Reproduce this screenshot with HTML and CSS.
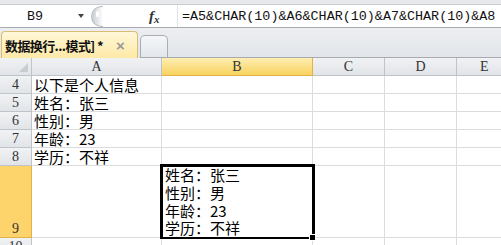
FILE: index.html
```html
<!DOCTYPE html>
<html>
<head>
<meta charset="utf-8">
<link rel="stylesheet" href="styles.css">
</head>
<body>
<div class="app">
  <div class="fbar">
    <div class="fbar-inner">
      <div class="namebox"><span class="name">B9</span><span class="drop"></span></div>
      <div class="splitter"><span class="dot"></span></div>
      <div class="fx">f<span class="x">x</span></div>
      <div class="formula">=A5&amp;CHAR(10)&amp;A6&amp;CHAR(10)&amp;A7&amp;CHAR(10)&amp;A8</div>
    </div>
  </div>
  <div class="tabs">
    <div class="tab active"><span class="tab-title">数据换行...模式] *</span><span class="close">×</span></div>
    <div class="tab blank"></div>
    <div class="tab-rest"></div>
  </div>
  <div class="grid">
    <div class="corner"><span class="tri"></span></div>
    <div class="ch">A</div>
    <div class="ch sel">B</div>
    <div class="ch">C</div>
    <div class="ch">D</div>
    <div class="ch last">E</div>

    <div class="rh">4</div><div class="c">以下是个人信息</div><div class="c"></div><div class="c"></div><div class="c"></div><div class="c last"></div>
    <div class="rh">5</div><div class="c">姓名：张三</div><div class="c"></div><div class="c"></div><div class="c"></div><div class="c last"></div>
    <div class="rh">6</div><div class="c">性别：男</div><div class="c"></div><div class="c"></div><div class="c"></div><div class="c last"></div>
    <div class="rh">7</div><div class="c">年龄：23</div><div class="c"></div><div class="c"></div><div class="c"></div><div class="c last"></div>
    <div class="rh">8</div><div class="c">学历：不祥</div><div class="c"></div><div class="c"></div><div class="c"></div><div class="c last"></div>
    <div class="rh sel">9</div><div class="c"></div><div class="c active"><div class="wrap">姓名：张三<br>性别：男<br>年龄：23<br>学历：不祥</div><span class="selbox"></span><span class="handle"></span></div><div class="c"></div><div class="c"></div><div class="c last"></div>
    <div class="rh">10</div><div class="c"></div><div class="c"></div><div class="c"></div><div class="c"></div><div class="c last"></div>
  </div>
</div>
</body>
</html>
```

FILE: styles.css
```css
* { box-sizing: border-box; }
html, body { margin: 0; padding: 0; }
body {
  width: 501px;
  height: 245px;
  overflow: hidden;
  background: #fff;
  font-family: "Noto Sans CJK SC", "Liberation Sans", sans-serif;
}
.app { width: 501px; height: 245px; overflow: hidden; }

/* formula bar */
.fbar {
  height: 28px;
  background: #e6e8eb;
  padding-top: 4px;
  border-bottom: 1px solid #a7abb0;
}
.fbar-inner {
  height: 23px;
  background: #fff;
  display: flex;
  align-items: center;
  border-top: 1px solid #c9ccd1;
}
.namebox {
  width: 89px;
  height: 100%;
  display: flex;
  align-items: center;
  position: relative;
}
.name {
  font-family: "Liberation Mono", monospace;
  font-size: 13.4px;
  color: #111;
  margin-left: 27px;
}
.drop {
  position: absolute;
  left: 78px;
  top: 9px;
  width: 0;
  height: 0;
  border-left: 3.5px solid transparent;
  border-right: 3.5px solid transparent;
  border-top: 4px solid #444;
}
.splitter {
  width: 12px;
  height: 21px;
  margin-left: 2px;
  border-radius: 11px 0 0 11px;
  background: linear-gradient(90deg, #c8ccd2, #eef0f2 70%, #fff);
  border: 1px solid #b9bec5;
  border-right: none;
  position: relative;
}
.dot {
  position: absolute;
  left: 4px;
  top: 4px;
  width: 3px;
  height: 6px;
  border-radius: 2px;
  background: #fff;
}
.fx {
  margin-left: 46px;
  width: 22px;
  font-family: "Liberation Serif", serif;
  font-style: italic;
  font-weight: bold;
  font-size: 15px;
  color: #333;
  line-height: 1;
}
.fx .x { font-size: 11px; position: relative; top: 2px; }
.formula {
  margin-left: 6px;
  font-family: "Liberation Mono", monospace;
  font-size: 13.4px;
  color: #111;
  white-space: nowrap;
  height: 100%;
  display: flex;
  align-items: center;
  border-left: 1px solid #e2e4e7;
  padding-left: 4px;
}

/* tabs */
.tabs {
  height: 30px;
  background: linear-gradient(#eceef1, #e2e5e9);
  display: flex;
  align-items: flex-end;
}
.tab.active {
  width: 137px;
  height: 27px;
  margin-left: 1px;
  border: 1px solid #d9bd72;
  border-bottom: none;
  border-radius: 4px 4px 0 0;
  background: linear-gradient(#fff7d8, #fee9a6);
  display: flex;
  align-items: center;
  padding-left: 3px;
}
.tab-title {
  font-weight: bold;
  font-size: 13px;
  color: #111;
  letter-spacing: -0.6px;
  white-space: nowrap;
}
.close {
  margin-left: 13px;
  font-family: "Liberation Sans", sans-serif;
  font-size: 15px;
  color: #9a9a9a;
  font-weight: bold;
}
.tab.blank {
  width: 28px;
  height: 23px;
  margin-left: 2px;
  border: 1px solid #a9aeb6;
  border-bottom: 1px solid #a7abb0;
  border-radius: 5px 5px 0 0;
  background: linear-gradient(#f4f6f8, #e3e7ec);
}
.tab-rest {
  flex: 1;
  height: 1px;
  background: #a7abb0;
}

/* grid */
.grid {
  display: grid;
  grid-template-columns: 32px 130px 151px 72px 72px 44px;
  grid-template-rows: 18px 18px 18px 18px 18px 18px 72px 18px;
  font-size: 15px;
}
.corner, .ch, .rh {
  background: linear-gradient(#f1f2f4, #e1e4e8);
  border-right: 1px solid #bfc4ca;
  border-bottom: 1px solid #bfc4ca;
  color: #333;
  font-family: "Liberation Serif", serif;
  font-size: 14px;
}
.corner { position: relative; }
.tri {
  position: absolute;
  right: 3px;
  bottom: 3px;
  width: 0; height: 0;
  border-left: 9px solid transparent;
  border-bottom: 9px solid #c9ccd1;
}
.ch {
  display: flex;
  align-items: center;
  justify-content: center;
  line-height: 1;
}
.ch.sel {
  background: linear-gradient(#fdeeb2, #f9d25f);
  border-bottom: 1px solid #e2b247;
  border-right: 1px solid #e2b247;
}
.ch.last { border-right: none; justify-content: flex-start; padding-left: 23px; }
.rh {
  display: flex;
  align-items: flex-end;
  justify-content: center;
  line-height: 17px;
}
.rh.sel {
  background: #fdd46b;
  border-color: #e2b247;
}
.c {
  border-right: 1px solid #dadcde;
  border-bottom: 1px solid #dadcde;
  padding-left: 2px;
  display: flex;
  align-items: flex-end;
  line-height: 17px;
  color: #000;
  white-space: nowrap;
  position: relative;
}
.c.last { border-right: none; }
.c.active {
  padding-left: 3px;
  align-items: flex-start;
  z-index: 2;
}
.wrap { line-height: 17.75px; }
.selbox {
  position: absolute;
  left: -2px;
  top: -2px;
  width: 155px;
  height: 75px;
  border: 3px solid #000;
  border-bottom-width: 2px;
}
.handle {
  position: absolute;
  right: -4px;
  bottom: -4px;
  width: 7px;
  height: 7px;
  background: #000;
  border: 1px solid #fff;
}
```
